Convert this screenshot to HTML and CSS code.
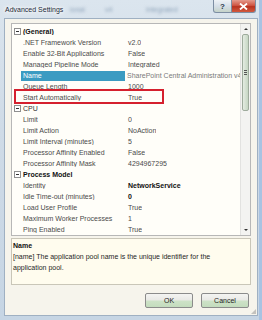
FILE: index.html
```html
<!DOCTYPE html>
<html lang="en">
<head>
    <meta charset="UTF-8">
    <title>Advanced Settings</title>
    <link rel="stylesheet" href="styles.css">
</head>
<body>

<div class="window">
    <div class="titlebar">
        <span class="title">Advanced Settings</span>
        <span class="ghost g1">ional</span>
        <span class="ghost g2">v4</span>
        <span class="ghost g3">Integrated</span>
        <div class="controls">
            <div class="ctl help">?</div>
            <div class="ctl close">
                <svg width="9" height="7" viewBox="0 0 9 7"><path d="M1 0.5 L8 6.5 M8 0.5 L1 6.5" stroke="#fff" stroke-width="1.8"/></svg>
            </div>
        </div>
    </div>

    <div class="client">
        <div class="grid">
            <div class="rows">
                <div class="row cat"><span class="gutter"><span class="box"></span></span><span class="name">(General)</span></div>
                <div class="row"><span class="gutter"></span><span class="name">.NET Framework Version</span><span class="value">v2.0</span></div>
                <div class="row"><span class="gutter"></span><span class="name">Enable 32-Bit Applications</span><span class="value">False</span></div>
                <div class="row"><span class="gutter"></span><span class="name">Managed Pipeline Mode</span><span class="value">Integrated</span></div>
                <div class="row selected"><span class="gutter"></span><span class="name">Name</span><span class="value">SharePoint Central Administration v4</span></div>
                <div class="row"><span class="gutter"></span><span class="name">Queue Length</span><span class="value">1000</span></div>
                <div class="row"><span class="gutter"></span><span class="name">Start Automatically</span><span class="value">True</span></div>
                <div class="row cat light"><span class="gutter"><span class="box"></span></span><span class="name">CPU</span></div>
                <div class="row"><span class="gutter"></span><span class="name">Limit</span><span class="value">0</span></div>
                <div class="row"><span class="gutter"></span><span class="name">Limit Action</span><span class="value">NoAction</span></div>
                <div class="row"><span class="gutter"></span><span class="name">Limit Interval (minutes)</span><span class="value">5</span></div>
                <div class="row"><span class="gutter"></span><span class="name">Processor Affinity Enabled</span><span class="value">False</span></div>
                <div class="row"><span class="gutter"></span><span class="name">Processor Affinity Mask</span><span class="value">4294967295</span></div>
                <div class="row cat"><span class="gutter"><span class="box"></span></span><span class="name">Process Model</span></div>
                <div class="row"><span class="gutter"></span><span class="name">Identity</span><span class="value strong">NetworkService</span></div>
                <div class="row"><span class="gutter"></span><span class="name">Idle Time-out (minutes)</span><span class="value strong">0</span></div>
                <div class="row"><span class="gutter"></span><span class="name">Load User Profile</span><span class="value">True</span></div>
                <div class="row"><span class="gutter"></span><span class="name">Maximum Worker Processes</span><span class="value">1</span></div>
                <div class="row"><span class="gutter"></span><span class="name">Ping Enabled</span><span class="value">True</span></div>
            </div>
            <div class="scrollbar">
                <span class="arrow up"></span>
                <div class="thumb"><span class="grip"></span></div>
                <span class="arrow down"></span>
            </div>
            <div class="mark"></div>
        </div>

        <div class="helppane">
            <p class="help-title">Name</p>
            <p class="help-text">[name] The application pool name is the unique identifier for the application pool.</p>
        </div>

        <div class="buttons">
            <button>OK</button>
            <button>Cancel</button>
        </div>
        <div class="sizer"></div>
    </div>
</div>

</body>
</html>
```

FILE: styles.css
```css
* {
    margin: 0;
    padding: 0;
    box-sizing: border-box;
}

body {
    font-family: 'Liberation Sans', Arial, sans-serif;
    font-size: 7px;
    background: #cbd8e5;
    color: #4a4a4a;
}

.window {
    width: 262px;
    height: 320px;
    background: linear-gradient(180deg, #dbe5ee 0%, #cfdbe7 40%, #c6d5e4 100%);
    border-right: 3px solid #a9c3e2;
    display: flex;
    flex-direction: column;
    position: relative;
}

.titlebar {
    height: 18px;
    display: flex;
    align-items: center;
    position: relative;
}

.title {
    margin-left: 5px;
    color: #1c2a3a;
    font-size: 7px;
    text-shadow: 0 0 3px #fff, 0 0 5px #fff, 0 0 6px #fff;
    position: relative;
    z-index: 1;
}

.ghost {
    position: absolute;
    top: 6px;
    color: #8ea3b9;
    filter: blur(1.4px);
    font-size: 7px;
}

.g1 { left: 70px; }
.g2 { left: 105px; }
.g3 { left: 146px; }

.controls {
    position: absolute;
    top: 0;
    right: 3px;
    display: flex;
}

.ctl {
    height: 13px;
    display: flex;
    align-items: center;
    justify-content: center;
    border: 1px solid #7d8ea3;
    border-top: none;
}

.help {
    width: 19px;
    background: linear-gradient(180deg, #eef2f6, #d6dfe8 50%, #c5d3c9);
    border-radius: 0 0 0 3px;
    color: #2b3a4a;
    font-weight: 700;
    font-size: 8px;
}

.close {
    width: 24px;
    background: linear-gradient(180deg, #e49a8c, #cf5644 45%, #b8321f 55%, #d25a3f);
    border-left: none;
    border-radius: 0 0 3px 0;
}

.client {
    margin: 0 1px 4px 4px;
    flex: 1;
    background: #f6f4ec;
    border: 1px solid #9fb0c2;
    padding: 4px 6px 0 6px;
    display: flex;
    flex-direction: column;
    position: relative;
}

.grid {
    height: 213px;
    background: #fffef9;
    border: 1px solid #b7b7b7;
    display: flex;
    position: relative;
}

.rows {
    flex: 1;
    padding-top: 2px;
    overflow: hidden;
}

.row {
    height: 11px;
    display: flex;
    align-items: center;
    white-space: nowrap;
}

.gutter {
    width: 10px;
    flex: none;
    display: flex;
    justify-content: center;
}

.box {
    width: 7px;
    height: 7px;
    border: 1px solid #8f8f8f;
    background: #fff;
    position: relative;
}

.box::after {
    content: "";
    position: absolute;
    left: 1px;
    top: 2px;
    width: 3px;
    height: 1px;
    background: #333;
}

.name {
    width: 104px;
    flex: none;
    padding-left: 1px;
    overflow: hidden;
}

.value {
    padding-left: 2px;
    overflow: hidden;
}

.cat .name {
    font-weight: 700;
    color: #111;
}

.cat.light .name {
    font-weight: 400;
    color: #333;
}

.strong {
    font-weight: 700;
    color: #111;
}

.selected .name {
    background: #3b9bc2;
    color: #fff;
    margin-left: -1px;
    padding-left: 2px;
    height: 10px;
    line-height: 10px;
}

.selected .value {
    color: #7a7a7a;
}

.scrollbar {
    width: 10px;
    flex: none;
    background: #f3f3f1;
    border-left: 1px solid #e2e2e0;
    display: flex;
    flex-direction: column;
    align-items: center;
    padding: 4px 0;
}

.arrow {
    width: 0;
    height: 0;
    border-left: 2px solid transparent;
    border-right: 2px solid transparent;
}

.arrow.up {
    border-bottom: 2px solid #333;
}

.arrow.down {
    border-top: 2px solid #333;
    margin-top: auto;
}

.thumb {
    width: 7px;
    height: 77px;
    margin-top: 4px;
    border: 1px solid #9eab9c;
    border-radius: 2px;
    background: linear-gradient(90deg, #e4ece2, #c6d6c3);
    display: flex;
    align-items: center;
    justify-content: center;
}

.grip {
    width: 3px;
    height: 5px;
    border-top: 1px solid #555;
    border-bottom: 1px solid #555;
    position: relative;
}

.grip::after {
    content: "";
    position: absolute;
    left: 0;
    top: 1px;
    width: 3px;
    height: 1px;
    background: #555;
}

.mark {
    position: absolute;
    left: 2px;
    top: 65px;
    width: 150px;
    height: 15px;
    border: 2px solid #d5202e;
}

.helppane {
    margin-top: 2px;
    height: 47px;
    background: #fffcee;
    border: 1px solid #c9c6b8;
    padding: 1px 1px;
    color: #1e1e1e;
    line-height: 11px;
}

.help-title {
    font-weight: 700;
    color: #111;
}

.help-text {
    width: 215px;
}

.buttons {
    margin-top: 8px;
    display: flex;
    justify-content: flex-end;
    gap: 8px;
    padding-right: 2px;
}

button {
    width: 48px;
    height: 15px;
    border: 1px solid #8b8b8b;
    border-radius: 2px;
    background: linear-gradient(180deg, #f4f4f2 0%, #e9e9e6 45%, #cde2c7 55%, #c3dcbd 100%);
    font-family: 'Liberation Sans', Arial, sans-serif;
    font-size: 7px;
    color: #222;
}

.sizer {
    position: absolute;
    right: 1px;
    bottom: 1px;
    width: 5px;
    height: 5px;
    background: radial-gradient(circle, #888 0.6px, transparent 0.8px) 0 0 / 2px 2px;
    clip-path: polygon(100% 0, 100% 100%, 0 100%);
}
```
